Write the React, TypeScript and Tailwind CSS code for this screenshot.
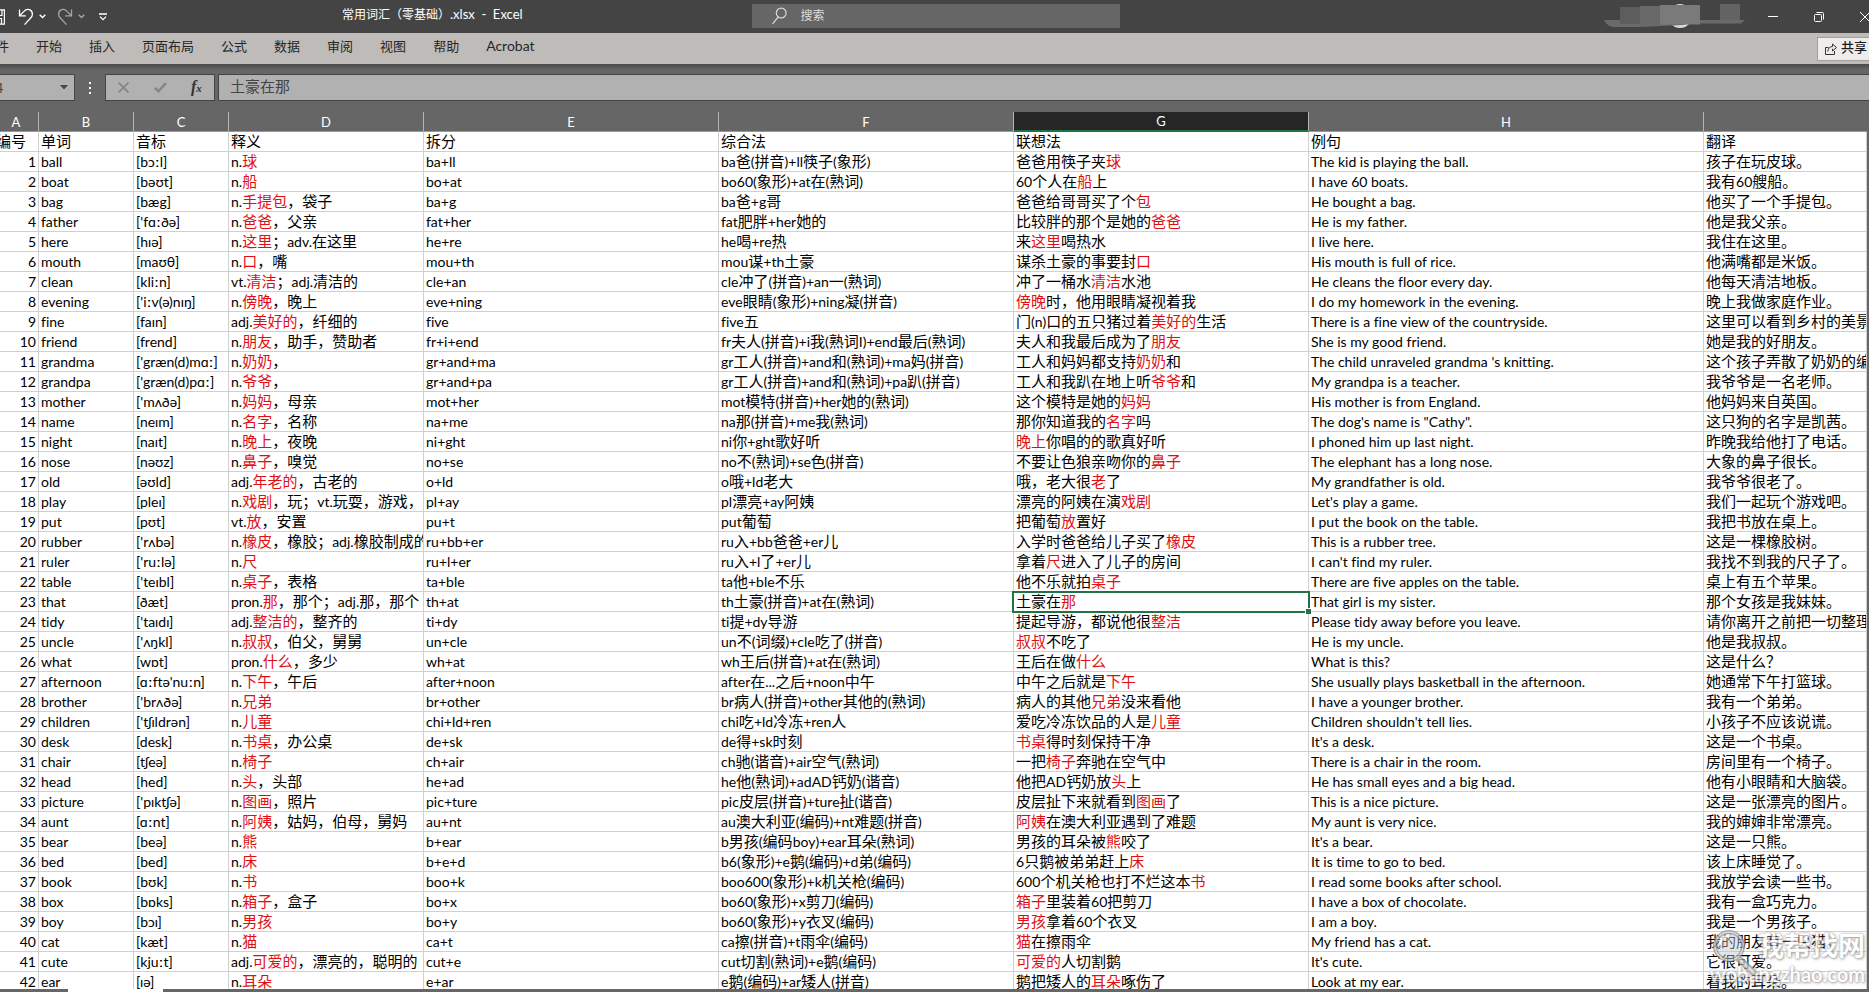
import { useState } from 'react'
import clsx from 'clsx'

interface Column {
  letter: string
  title: string
  width: string
}

const columns: Column[] = [
  { letter: 'A', title: '编号', width: 'w-[39px]' },
  { letter: 'B', title: '单词', width: 'w-[95px]' },
  { letter: 'C', title: '音标', width: 'w-[95px]' },
  { letter: 'D', title: '释义', width: 'w-[195px]' },
  { letter: 'E', title: '拆分', width: 'w-[295px]' },
  { letter: 'F', title: '综合法', width: 'w-[295px]' },
  { letter: 'G', title: '联想法', width: 'w-[295px]' },
  { letter: 'H', title: '例句', width: 'w-[395px]' },
  { letter: '', title: '翻译', width: 'w-auto' },
]

// Text between asterisks is shown in red
const words: string[][] = [
  ['ball', '[bɔːl]', 'n.*球*', 'ba+ll', 'ba爸(拼音)+ll筷子(象形)', '爸爸用筷子夹*球*', 'The kid is playing the ball.', '孩子在玩皮球。'],
  ['boat', '[bəʊt]', 'n.*船*', 'bo+at', 'bo60(象形)+at在(熟词)', '60个人在*船*上', 'I have 60 boats.', '我有60艘船。'],
  ['bag', '[bæg]', 'n.*手提包*，袋子', 'ba+g', 'ba爸+g哥', '爸爸给哥哥买了个*包*', 'He bought a bag.', '他买了一个手提包。'],
  ['father', "['fɑːðə]", 'n.*爸爸*，父亲', 'fat+her', 'fat肥胖+her她的', '比较胖的那个是她的*爸爸*', 'He is my father.', '他是我父亲。'],
  ['here', '[hɪə]', 'n.*这里*；adv.在这里', 'he+re', 'he喝+re热', '来*这里*喝热水', 'I live here.', '我住在这里。'],
  ['mouth', '[maʊθ]', 'n.*口*，嘴', 'mou+th', 'mou谋+th土豪', '谋杀土豪的事要封*口*', 'His mouth is full of rice.', '他满嘴都是米饭。'],
  ['clean', '[kliːn]', 'vt.*清洁*；adj.清洁的', 'cle+an', 'cle冲了(拼音)+an一(熟词)', '冲了一桶水*清洁*水池', 'He cleans the floor every day.', '他每天清洁地板。'],
  ['evening', "['iːv(ə)nɪŋ]", 'n.*傍晚*，晚上', 'eve+ning', 'eve眼睛(象形)+ning凝(拼音)', '*傍晚*时，他用眼睛凝视着我', 'I do my homework in the evening.', '晚上我做家庭作业。'],
  ['fine', '[faɪn]', 'adj.*美好的*，纤细的', 'five', 'five五', '门(n)口的五只猪过着*美好的*生活', 'There is a fine view of the countryside.', '这里可以看到乡村的美景。'],
  ['friend', '[frend]', 'n.*朋友*，助手，赞助者', 'fr+i+end', 'fr夫人(拼音)+i我(熟词I)+end最后(熟词)', '夫人和我最后成为了*朋友*', 'She is my good friend.', '她是我的好朋友。'],
  ['grandma', "['græn(d)mɑː]", 'n.*奶奶*，', 'gr+and+ma', 'gr工人(拼音)+and和(熟词)+ma妈(拼音)', '工人和妈妈都支持*奶奶*和', "The child unraveled grandma 's knitting.", '这个孩子弄散了奶奶的编织物。'],
  ['grandpa', "['græn(d)pɑː]", 'n.*爷爷*，', 'gr+and+pa', 'gr工人(拼音)+and和(熟词)+pa趴(拼音)', '工人和我趴在地上听*爷爷*和', 'My grandpa is a teacher.', '我爷爷是一名老师。'],
  ['mother', "['mʌðə]", 'n.*妈妈*，母亲', 'mot+her', 'mot模特(拼音)+her她的(熟词)', '这个模特是她的*妈妈*', 'His mother is from England.', '他妈妈来自英国。'],
  ['name', '[neɪm]', 'n.*名字*，名称', 'na+me', 'na那(拼音)+me我(熟词)', '那你知道我的*名字*吗', 'The dog\'s name is "Cathy".', '这只狗的名字是凯茜。'],
  ['night', '[naɪt]', 'n.*晚上*，夜晚', 'ni+ght', 'ni你+ght歌好听', '*晚上*你唱的的歌真好听', 'I phoned him up last night.', '昨晚我给他打了电话。'],
  ['nose', '[nəʊz]', 'n.*鼻子*，嗅觉', 'no+se', 'no不(熟词)+se色(拼音)', '不要让色狼亲吻你的*鼻子*', 'The elephant has a long nose.', '大象的鼻子很长。'],
  ['old', '[əʊld]', 'adj.*年老的*，古老的', 'o+ld', 'o哦+ld老大', '哦，老大很*老*了', 'My grandfather is old.', '我爷爷很老了。'],
  ['play', '[pleɪ]', 'n.*戏剧*，玩；vt.玩耍，游戏，', 'pl+ay', 'pl漂亮+ay阿姨', '漂亮的阿姨在演*戏剧*', "Let's play a game.", '我们一起玩个游戏吧。'],
  ['put', '[pʊt]', 'vt.*放*，安置', 'pu+t', 'put葡萄', '把葡萄*放*置好', 'I put the book on the table.', '我把书放在桌上。'],
  ['rubber', "['rʌbə]", 'n.*橡皮*，橡胶；adj.橡胶制成的', 'ru+bb+er', 'ru入+bb爸爸+er儿', '入学时爸爸给儿子买了*橡皮*', 'This is a rubber tree.', '这是一棵橡胶树。'],
  ['ruler', "['ruːlə]", 'n.*尺*', 'ru+l+er', 'ru入+l了+er儿', '拿着*尺*进入了儿子的房间', "I can't find my ruler.", '我找不到我的尺子了。'],
  ['table', "['teɪbl]", 'n.*桌子*，表格', 'ta+ble', 'ta他+ble不乐', '他不乐就拍*桌子*', 'There are five apples on the table.', '桌上有五个苹果。'],
  ['that', '[ðæt]', 'pron.*那*，那个；adj.那，那个', 'th+at', 'th土豪(拼音)+at在(熟词)', '土豪在*那*', 'That girl is my sister.', '那个女孩是我妹妹。'],
  ['tidy', "['taɪdɪ]", 'adj.*整洁的*，整齐的', 'ti+dy', 'ti提+dy导游', '提起导游，都说他很*整洁*', 'Please tidy away before you leave.', '请你离开之前把一切整理好。'],
  ['uncle', "['ʌŋkl]", 'n.*叔叔*，伯父，舅舅', 'un+cle', 'un不(词缀)+cle吃了(拼音)', '*叔叔*不吃了', 'He is my uncle.', '他是我叔叔。'],
  ['what', '[wɒt]', 'pron.*什么*，多少', 'wh+at', 'wh王后(拼音)+at在(熟词)', '王后在做*什么*', 'What is this?', '这是什么？'],
  ['afternoon', "[ɑːftə'nuːn]", 'n.*下午*，午后', 'after+noon', 'after在...之后+noon中午', '中午之后就是*下午*', 'She usually plays basketball in the afternoon.', '她通常下午打篮球。'],
  ['brother', "['brʌðə]", 'n.*兄弟*', 'br+other', 'br病人(拼音)+other其他的(熟词)', '病人的其他*兄弟*没来看他', 'I have a younger brother.', '我有一个弟弟。'],
  ['children', "['tʃɪldrən]", 'n.*儿童*', 'chi+ld+ren', 'chi吃+ld冷冻+ren人', '爱吃冷冻饮品的人是*儿童*', "Children shouldn't tell lies.", '小孩子不应该说谎。'],
  ['desk', '[desk]', 'n.*书桌*，办公桌', 'de+sk', 'de得+sk时刻', '*书桌*得时刻保持干净', "It's a desk.", '这是一个书桌。'],
  ['chair', '[tʃeə]', 'n.*椅子*', 'ch+air', 'ch驰(谐音)+air空气(熟词)', '一把*椅子*奔驰在空气中', 'There is a chair in the room.', '房间里有一个椅子。'],
  ['head', '[hed]', 'n.*头*，头部', 'he+ad', 'he他(熟词)+adAD钙奶(谐音)', '他把AD钙奶放*头*上', 'He has small eyes and a big head.', '他有小眼睛和大脑袋。'],
  ['picture', "['pɪktʃə]", 'n.*图画*，照片', 'pic+ture', 'pic皮层(拼音)+ture扯(谐音)', '皮层扯下来就看到*图画*了', 'This is a nice picture.', '这是一张漂亮的图片。'],
  ['aunt', '[ɑːnt]', 'n.*阿姨*，姑妈，伯母，舅妈', 'au+nt', 'au澳大利亚(编码)+nt难题(拼音)', '*阿姨*在澳大利亚遇到了难题', 'My aunt is very nice.', '我的婶婶非常漂亮。'],
  ['bear', '[beə]', 'n.*熊*', 'b+ear', 'b男孩(编码boy)+ear耳朵(熟词)', '男孩的耳朵被*熊*咬了', "It's a bear.", '这是一只熊。'],
  ['bed', '[bed]', 'n.*床*', 'b+e+d', 'b6(象形)+e鹅(编码)+d弟(编码)', '6只鹅被弟弟赶上*床*', 'It is time to go to bed.', '该上床睡觉了。'],
  ['book', '[bʊk]', 'n.*书*', 'boo+k', 'boo600(象形)+k机关枪(编码)', '600个机关枪也打不烂这本*书*', 'I read some books after school.', '我放学会读一些书。'],
  ['box', '[bɒks]', 'n.*箱子*，盒子', 'bo+x', 'bo60(象形)+x剪刀(编码)', '*箱子*里装着60把剪刀', 'I have a box of chocolate.', '我有一盒巧克力。'],
  ['boy', '[bɔɪ]', 'n.*男孩*', 'bo+y', 'bo60(象形)+y衣叉(编码)', '*男孩*拿着60个衣叉', 'I am a boy.', '我是一个男孩子。'],
  ['cat', '[kæt]', 'n.*猫*', 'ca+t', 'ca擦(拼音)+t雨伞(编码)', '*猫*在擦雨伞', 'My friend has a cat.', '我的朋友有一只猫。'],
  ['cute', '[kjuːt]', 'adj.*可爱的*，漂亮的，聪明的', 'cut+e', 'cut切割(熟词)+e鹅(编码)', '*可爱的*人切割鹅', "It's cute.", '它很可爱。'],
  ['ear', '[ɪə]', 'n.*耳朵*', 'e+ar', 'e鹅(编码)+ar矮人(拼音)', '鹅把矮人的*耳朵*啄伤了', 'Look at my ear.', '看我的耳朵。'],
]

const tabs = ['文件', '开始', '插入', '页面布局', '公式', '数据', '审阅', '视图', '帮助', 'Acrobat']

// Chinese glyphs are set a step larger than the Latin ones around them
function CellText({ text }: { text: string }) {
  return (
    <>
      {text.split('*').map((part, i) => (
        <span key={i} className={i % 2 === 1 ? 'text-[#e00f14]' : undefined}>
          {part.split(/([\u3000-\u9fff\uff00-\uffef]+)/).map((run, j) =>
            j % 2 === 1 ? (
              <span key={j} className="text-[15px]">{run}</span>
            ) : (
              run
            )
          )}
        </span>
      ))}
    </>
  )
}

function Chevron({ className }: { className?: string }) {
  return (
    <svg className={className} width="7" height="5" viewBox="0 0 7 5" fill="none" stroke="currentColor" strokeWidth="1.4">
      <path d="M0.7 0.8 3.5 3.6 6.3 0.8" />
    </svg>
  )
}

function TitleBar() {
  return (
    <header className="relative flex h-[33px] items-center justify-between overflow-hidden bg-[#444444] text-xs text-white">
      <div className="flex items-center">
        <button aria-label="保存" className="w-[5px]">
          <svg width="5" height="16" viewBox="0 0 5 16" fill="none" stroke="currentColor" strokeWidth="1.2">
            <path d="M0 0.8H4.4V15.2H0M0 6.5H2V0.8M0 9.5H1.5V15" />
          </svg>
        </button>
        <button aria-label="撤消" className="ml-[13px]">
          <svg width="16" height="18" viewBox="0 0 16 18" fill="none" stroke="currentColor" strokeWidth="1.3">
            <path d="M1.5 1.5V7.8H7.8" />
            <path d="M1.8 7.5 6 3.4C9-0.2 14.4 1.6 14.4 6.2 14.4 8 13.7 9 12.4 10.3L6.5 16.6" />
          </svg>
        </button>
        <button aria-label="撤消选项" className="ml-[5px]"><Chevron /></button>
        <button aria-label="恢复" className="ml-[11px] text-[#a5a5a5]">
          <svg width="16" height="18" viewBox="0 0 16 18" fill="none" stroke="currentColor" strokeWidth="1.3">
            <path d="M14.5 1.5V7.8H8.2" />
            <path d="M14.2 7.5 10 3.4C7-0.2 1.6 1.6 1.6 6.2 1.6 8 2.3 9 3.6 10.3L9.5 16.6" />
          </svg>
        </button>
        <button aria-label="恢复选项" className="ml-[5px] text-[#a5a5a5]"><Chevron /></button>
        <button aria-label="自定义快速访问工具栏" className="ml-[14px]">
          <svg width="8" height="8" viewBox="0 0 8 8" fill="none" stroke="currentColor" strokeWidth="1.3">
            <path d="M0 1H8M1 3.6 4 6.6 7 3.6" />
          </svg>
        </button>
      </div>
      <h1 className="absolute left-[342px] top-1 whitespace-pre leading-5">
        常用词汇（零基础）<span className="text-[13px]">.xlsx  -  Excel</span>
      </h1>
      <label className="absolute left-1/2 top-1 ml-px flex h-6 w-[368px] -translate-x-1/2 items-center bg-[#666666] pl-5">
        <svg width="15" height="18" viewBox="0 0 15 18" fill="none" stroke="#d8d8d8" strokeWidth="1.2">
          <circle cx="9.2" cy="6" r="4.9" />
          <path d="M6.2 10 0.6 16.8" />
        </svg>
        <input aria-label="搜索" placeholder="搜索" className="ml-[14px] flex-1 bg-transparent outline-none placeholder:text-[#dedede]" />
      </label>
      <div className="flex items-center">
        {/* Account name, hidden behind a mosaic */}
        <svg className="mr-[21px]" width="144" height="26" viewBox="0 0 144 26">
          <circle cx="77" cy="12" r="12" fill="#d9d9d9" />
          <path d="M1 16H142L138 19.5H86L80 21 36 23H10Q4 22 1 16Z" fill="#6a6a6a" />
          <path d="M17 3H37V20H17Z" fill="#5d5d5d" />
          <path d="M37 2H57V20H37Z" fill="#686868" />
          <path d="M57 1H97V20.500H57Z" fill="#7a7a7a" />
          <path d="M117 0H137V16H117Z" fill="#636363" />
        </svg>
        <button aria-label="最小化" className="mr-9">
          <svg width="10" height="10" viewBox="0 0 10 10" stroke="currentColor"><path d="M0 4.5H10" /></svg>
        </button>
        <button aria-label="向下还原" className="mr-9">
          <svg width="10" height="10" viewBox="0 0 10 10" fill="none" stroke="currentColor">
            <rect x="0.500" y="2.500" width="7" height="7" rx="1" />
            <path d="M2.500 0.500H8.500Q9.500 0.500 9.500 1.500V7.500" />
          </svg>
        </button>
        <button aria-label="关闭" className="-mr-px">
          <svg width="10" height="10" viewBox="0 0 10 10" stroke="currentColor"><path d="M0 0 10 10M10 0 0 10" /></svg>
        </button>
      </div>
    </header>
  )
}

function Ribbon() {
  return (
    <nav className="flex h-[31px] items-center justify-between overflow-hidden bg-[#bfbbb8] text-[13px] text-[#262626]">
      <div className="-ml-[17px] flex gap-[27px] pb-[6px]">
        {tabs.map((tab) => (
          <button key={tab} className={clsx('whitespace-nowrap leading-5', tab === 'Acrobat' && 'text-sm leading-5')}>{tab}</button>
        ))}
      </div>
      <button className="flex h-6 items-center gap-1 border border-r-0 border-[#a0a0a0] bg-[#eeedec] pb-px pl-[7px] pr-[2px] font-medium text-[#1c1c1c]">
        <svg width="12" height="13" viewBox="0 0 12 13" fill="none" stroke="#333333">
          <path d="M3.500 5.500H0.500V12.500H9.500V9" />
          <path d="M2.800 9.500C3 6.200 5 4.500 7.500 4.500V2L11.500 5.600 7.500 9V6.800" />
        </svg>
        共享
      </button>
    </nav>
  )
}

function FormulaBar() {
  const [formula, setFormula] = useState('土豪在那')

  return (
    <div className="flex h-12 items-start bg-[#666666] bg-linear-to-b from-[#4a4a4a] to-[#666666] to-[6px] pt-[10px]">
      <div className="flex h-[27px] w-[75px] items-center overflow-hidden border border-l-0 border-[#444444] bg-[#b1b1b1]">
        <input aria-label="名称框" defaultValue="G24" className="-ml-[23px] w-20 shrink-0 bg-transparent text-sm text-[#444444] outline-none" />
        <svg width="8" height="5" viewBox="0 0 8 5" fill="#444444" className="ml-[3px] shrink-0"><path d="M0 0H8L4 4.500Z" /></svg>
      </div>
      <div className="flex h-[27px] w-[30px] flex-col items-center justify-center gap-[3px]">
        <span className="size-[2px] bg-white" />
        <span className="size-[2px] bg-white" />
        <span className="size-[2px] bg-white" />
      </div>
      <div className="flex h-[27px] w-[110px] items-center border border-[#444444] bg-[#b1b1b1] pl-3">
        <button aria-label="取消">
          <svg width="11" height="11" viewBox="0 0 11 11" stroke="#858585" strokeWidth="1.7"><path d="M0.500 0.500 10.500 10.500M10.500 0.500 0.500 10.500" /></svg>
        </button>
        <button aria-label="输入" className="ml-[25px]">
          <svg width="13" height="11" viewBox="0 0 13 11" fill="none" stroke="#858585" strokeWidth="2.500"><path d="M0.800 5.800 4.500 9.300 12 1" /></svg>
        </button>
        <button aria-label="插入函数" className="ml-6 font-['Liberation_Serif',serif] text-base font-bold italic leading-5 text-[#333333]">
          f<span className="text-[11px]">x</span>
        </button>
      </div>
      <input
        aria-label="编辑栏"
        value={formula}
        onChange={(e) => setFormula(e.target.value)}
        className="ml-[3px] h-[27px] min-w-0 flex-1 border border-r-0 border-[#444444] bg-[#b1b1b1] pb-1 pl-[11px] text-[15px] text-[#444444] outline-none"
      />
    </div>
  )
}

function Sheet() {
  return (
    <table className="w-full table-fixed border-separate border-spacing-0 bg-white text-sm text-black">
      <colgroup>
        {columns.map((col) => (
          <col key={col.title} className={col.width} />
        ))}
      </colgroup>
      <thead>
        <tr>
          {columns.map((col, i) => (
            <th
              key={col.title}
              scope="col"
              className={clsx(
                'h-5 p-0 text-[13px] font-normal leading-[18px] text-white',
                i === 0 && 'pr-[6px]',
                i < columns.length - 1 && 'border-r border-r-[#b4b4b4]',
                col.letter === 'G'
                  ? 'border-b-2 border-b-[#217346] bg-[#262626]'
                  : 'border-b border-b-[#999999] bg-[#666666]'
              )}
            >
              {col.letter}
            </th>
          ))}
        </tr>
      </thead>
      <tbody>
        <tr>
          {columns.map((col, i) => (
            <td key={col.title} className="h-5 border-b border-r border-[#d0d0d0] p-0">
              <div className={clsx('h-[19px] overflow-hidden whitespace-nowrap pl-[2px] leading-[19px]', i === 0 && '-ml-[6px]')}>
                <CellText text={col.title} />
              </div>
            </td>
          ))}
        </tr>
        {words.map((word, row) => (
          <tr key={word[0]}>
            <td className="h-5 border-b border-r border-[#d0d0d0] p-0 pr-[2px] text-right leading-[19px]">{row + 1}</td>
            {word.map((text, i) => {
              const selected = word[0] === 'that' && i === 5
              return (
                <td key={i} className={clsx('h-5 border-b border-r border-[#d0d0d0] p-0', selected && 'relative')}>
                  <div className="h-[19px] overflow-hidden whitespace-nowrap pl-[2px] leading-[19px]">
                    <CellText text={text} />
                  </div>
                  {selected && (
                    <div className="absolute -bottom-[2px] -left-[2px] -right-[2px] -top-px border-2 border-[#217346]">
                      <span className="absolute -bottom-[3px] -right-[3px] size-[6px] border-l border-t border-white bg-[#217346]" />
                    </div>
                  )}
                </td>
              )
            })}
          </tr>
        ))}
      </tbody>
    </table>
  )
}

function Watermark() {
  return (
    <div className="pointer-events-none absolute bottom-[6px] right-1 flex flex-col items-end opacity-75">
      <svg className="absolute -left-[2px] -top-1" width="52" height="52" viewBox="0 0 52 52" fill="none">
        <path d="M31 33 45 46" stroke="#9a9a9a" strokeWidth="7" strokeLinecap="round" />
        <path d="M31 33 45 46" stroke="#d2d2d2" strokeWidth="3" strokeLinecap="round" />
        <circle cx="21" cy="20" r="14" fill="#b9c6d2" fillOpacity="0.6" stroke="#8a8a8a" strokeWidth="4" />
        <circle cx="21" cy="20" r="14" stroke="#cfcfcf" strokeWidth="1.500" />
        <path d="M12 17Q14 10 22 10" stroke="#ffffff" strokeWidth="2.500" strokeLinecap="round" />
      </svg>
      <span className="text-[27px] font-bold leading-8 text-white [text-shadow:0_0_2px_#777,1px_1px_3px_#888]">我帮找网</span>
      <span className="text-[20px] font-bold leading-6 text-white [text-shadow:0_0_2px_#777,1px_1px_3px_#888]">wobangzhao.com</span>
    </div>
  )
}

export default function App() {
  return (
    <div className="relative overflow-hidden bg-[#666666] font-[Lato,'Noto_Sans','Noto_Sans_CJK_SC',sans-serif] [font-variant-ligatures:none]">
      <TitleBar />
      <Ribbon />
      <FormulaBar />
      <main className="pr-[2px]">
        <Sheet />
      </main>
      <Watermark />
      {/* Top edge of the scroll bar */}
      <div className="absolute inset-x-0 bottom-0 flex h-[3px]">
        <span className="w-[68px] bg-[#666666]" />
        <span className="w-[95px] bg-white" />
        <span className="flex-1 bg-[#666666]" />
      </div>
    </div>
  )
}
